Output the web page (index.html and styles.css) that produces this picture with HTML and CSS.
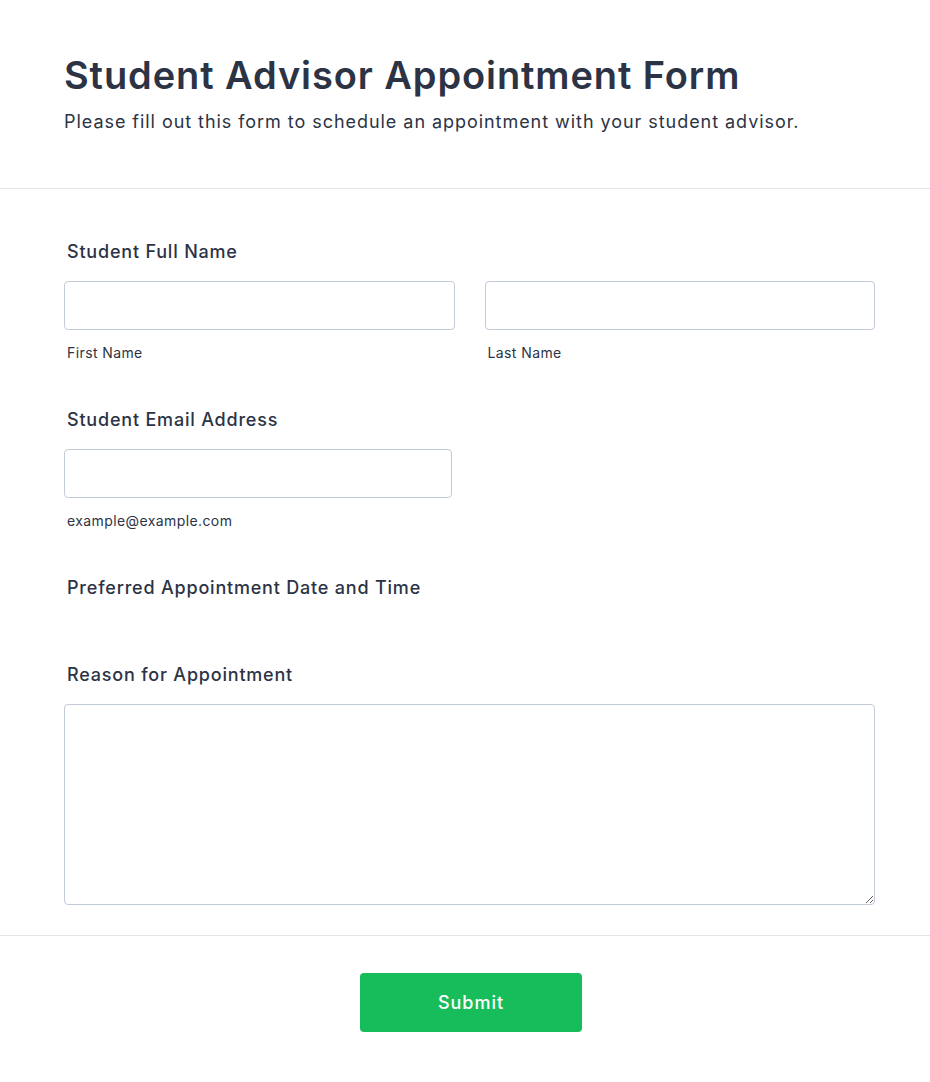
FILE: index.html
```html
<!DOCTYPE html>
<html lang="en">
<head>
<meta charset="utf-8">
<title>Student Advisor Appointment Form</title>
<link rel="stylesheet" href="styles.css">
</head>
<body>
<form class="form">
  <header class="form-header">
    <h1 class="form-title">Student Advisor Appointment Form</h1>
    <p class="form-subtitle">Please fill out this form to schedule an appointment with your student advisor.</p>
  </header>
  <div class="form-body">
    <div class="field">
      <label class="field-label">Student Full Name</label>
      <div class="name-row">
        <div class="sub-field">
          <input class="text-input" type="text">
          <span class="sub-label">First Name</span>
        </div>
        <div class="sub-field">
          <input class="text-input" type="text">
          <span class="sub-label">Last Name</span>
        </div>
      </div>
    </div>
    <div class="field">
      <label class="field-label">Student Email Address</label>
      <div class="email-wrap">
        <input class="text-input" type="email">
        <span class="sub-label">example@example.com</span>
      </div>
    </div>
    <div class="field field-date">
      <label class="field-label">Preferred Appointment Date and Time</label>
      <div class="date-slot"></div>
    </div>
    <div class="field field-last">
      <label class="field-label">Reason for Appointment</label>
      <textarea class="text-area"></textarea>
    </div>
  </div>
  <div class="form-footer">
    <button class="submit-btn" type="button">Submit</button>
  </div>
</form>
</body>
</html>
```
FILE: styles.css
```css
* {
  box-sizing: border-box;
}

html, body {
  margin: 0;
  padding: 0;
  background: #ffffff;
}

body {
  font-family: Inter, "Noto Sans", sans-serif;
  color: #2c3345;
}

.form-header {
  padding: 52px 64px 53px;
  border-bottom: 1px solid #e3e5ea;
}

.form-title {
  margin: 0;
  font-size: 38px;
  line-height: 46px;
  font-weight: 600;
  letter-spacing: 0.9px;
}

.form-subtitle {
  margin: 10px 0 0;
  font-size: 18px;
  line-height: 27px;
  font-weight: 400;
  letter-spacing: 0.95px;
}

.form-body {
  padding: 49px 55px 30px 64px;
  border-bottom: 1px solid #e3e5ea;
}

.field {
  margin-bottom: 43px;
}

.field-last {
  margin-bottom: 0;
}

.field-label {
  display: block;
  font-size: 18px;
  line-height: 28px;
  font-weight: 500;
  letter-spacing: 0.8px;
  padding-left: 3px;
  margin-bottom: 15px;
}

.field-date .field-label {
  margin-bottom: 0;
}

.name-row {
  display: flex;
  gap: 30px;
}

.sub-field {
  flex: 1 1 0;
  display: flex;
  flex-direction: column;
}

.email-wrap {
  width: 388px;
  display: flex;
  flex-direction: column;
}

.text-input {
  display: block;
  width: 100%;
  height: 49px;
  border: 1px solid #c3cad8;
  border-radius: 4px;
  background: #fff;
  margin: 0;
}

.sub-label {
  display: block;
  font-size: 14px;
  line-height: 20px;
  letter-spacing: 0.4px;
  padding-left: 3px;
  margin-top: 13px;
  color: #2c3345;
}

.date-slot {
  height: 16px;
}

.text-area {
  display: block;
  width: 100%;
  height: 201px;
  border: 1px solid #c3cad8;
  border-radius: 4px;
  margin: 0;
  resize: vertical;
  font-family: inherit;
}

.form-footer {
  display: flex;
  justify-content: center;
  padding: 37px 55px 50px 67px;
}

.submit-btn {
  width: 222px;
  height: 59px;
  border: none;
  border-radius: 4px;
  background: #18bd5b;
  color: #ffffff;
  font-family: Inter, "Noto Sans", sans-serif;
  font-size: 18px;
  font-weight: 500;
  letter-spacing: 1px;
  cursor: pointer;
}
```
